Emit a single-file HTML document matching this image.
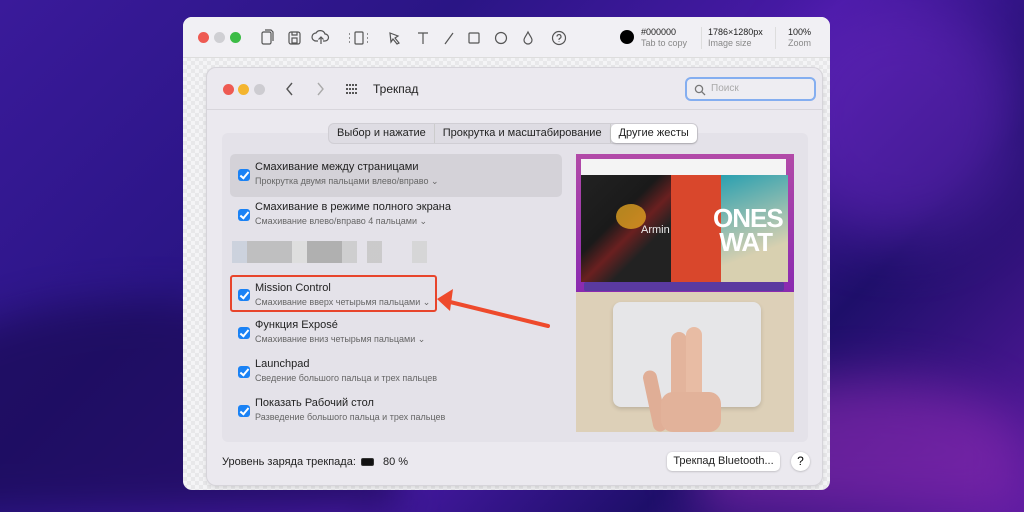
<!DOCTYPE html>
<html style="width:1024px;height:512px;overflow:hidden"><head><meta charset="utf-8"><style>
*{margin:0;padding:0;box-sizing:border-box}
html{background:#2a1585}
body{width:1024px;height:512px;overflow:hidden;position:relative;font-family:"Liberation Sans","Noto Sans CJK SC",sans-serif;
background:linear-gradient(135deg,#3a1a9a 0%,#2a1585 30%,#4a1aa8 55%,#1e0f6a 75%,#5a1aa0 100%)}
.bgw{position:absolute;left:0;top:0;width:1024px;height:512px;overflow:hidden}
.bg1{position:absolute;left:-100px;top:300px;width:500px;height:212px;border-radius:50% 50% 0 0;background:#1a0b55;opacity:.7;filter:blur(20px)}
.bg2{position:absolute;left:780px;top:0;width:244px;height:240px;border-radius:50%;background:#6a28c0;opacity:.5;filter:blur(30px)}
.bg3{position:absolute;left:700px;top:380px;width:324px;height:132px;border-radius:50% 50% 0 0;background:#8a2ab0;opacity:.6;filter:blur(25px)}
.outer{position:absolute;left:183px;top:17px;width:647px;height:473px;border-radius:9px;overflow:hidden;
background-color:#f4f4f6;background-image:linear-gradient(45deg,#e8e8ea 25%,transparent 25%,transparent 75%,#e8e8ea 75%),linear-gradient(45deg,#e8e8ea 25%,transparent 25%,transparent 75%,#e8e8ea 75%);background-size:8px 8px;background-position:0 0,4px 4px}
.tb{position:absolute;left:0;top:0;width:100%;height:41px;background:#f1f0f4;border-bottom:1px solid #ddd}
.dot{position:absolute;width:11px;height:11px;border-radius:50%}
.tx{position:absolute;font-size:9px;color:#222;line-height:11px}
.tx small{display:block;color:#888;font-size:9px}
.inner{position:absolute;left:24px;top:51px;width:615px;height:417px;background:#ebe9ef;border-radius:9px;box-shadow:0 0 0 1px #d6d4da,0 2px 6px rgba(0,0,0,.15)}
.hdr{position:absolute;left:0;top:0;width:100%;height:42px;border-bottom:1px solid #d8d6dc}
.panel{position:absolute;left:15px;top:65px;width:586px;height:309px;background:#e4e2e9;border-radius:6px}
.tabs{position:absolute;left:122px;top:56px;height:19px;border-radius:5px;background:#dedce3;display:flex;font-size:11px;color:#222;box-shadow:0 0 0 1px #d0ced4}
.tabs div{padding:3px 8px;line-height:13px;border-right:1px solid #ccc}
.tabs .sel{background:#fff;border-radius:5px;border:none;box-shadow:0 1px 2px rgba(0,0,0,.2)}
.row{position:absolute;left:8px;width:332px;height:43px}
.cb{position:absolute;left:8px;top:15px;width:12px;height:12px;border-radius:3px;background:#1a82f5}
.cb:after{content:"";position:absolute;left:4px;top:1px;width:3px;height:7px;border:solid #fff;border-width:0 2px 2px 0;transform:rotate(40deg)}
.t1{position:absolute;left:25px;top:7px;font-size:11px;color:#222}
.t2{position:absolute;left:25px;top:22px;font-size:9px;color:#666}
</style></head><body>
<div class="bgw"><div class="bg1"></div><div class="bg2"></div><div class="bg3"></div></div>
<div class="outer">
 <div class="tb">
  <div class="dot" style="left:15px;top:15px;background:#ee5a52"></div>
  <div class="dot" style="left:31px;top:15px;background:#cfcfd3"></div>
  <div class="dot" style="left:47px;top:15px;background:#3cbc46"></div>
  <svg style="position:absolute;left:76px;top:12px" width="320" height="18" fill="none" stroke="#555" stroke-width="1.2">
   <rect x="3" y="3" width="9" height="12" rx="1.5"/><path d="M6 1h6l2 2v9"/>
   <rect x="30" y="3" width="11" height="12" rx="2"/><rect x="33" y="9" width="5" height="5"/><path d="M33 3v3h5V3"/>
   <path d="M59 12h-2a4 4 0 0 1 0-8a5 5 0 0 1 9 1a3.5 3.5 0 0 1 0 7h-2M62 15V8M59.5 10.5L62 8l2.5 2.5"/>
   <rect x="96" y="3" width="8" height="12" rx="1"/><path d="M90 5h1M90 9h1M90 13h1M108 5h1M108 9h1M108 13h1" stroke-dasharray="1 1"/>
   <path d="M131 4l8 3-3 2 4 5-2 1-4-5-2 3z"/>
   <path d="M159 4h10M164 4v11"/>
   <path d="M186 15l8-11"/>
   <rect x="210" y="4" width="10" height="10" rx="1"/>
   <circle cx="242" cy="9" r="5.5"/>
   <path d="M269 3c-2 4-4 6-4 8a4 4 0 0 0 8 0c0-2-2-4-4-8z"/>
   <circle cx="300" cy="9" r="6.5"/><path d="M298 7.5a2 2 0 1 1 2.5 2c-.5.3-.5.8-.5 1.5M300 12.5v.5"/>
  </svg>
  <div class="dot" style="left:437px;top:13px;width:14px;height:14px;background:#000"></div>
  <div class="tx" style="left:458px;top:10px">#000000<small>Tab to copy</small></div>
  <div class="tx" style="left:525px;top:10px">1786×1280px<small>Image size</small></div>
  <div style="position:absolute;left:518px;top:10px;width:1px;height:22px;background:#ddd"></div>
  <div style="position:absolute;left:592px;top:10px;width:1px;height:22px;background:#ddd"></div>
  <div class="tx" style="left:605px;top:10px;text-align:right">100%<small>Zoom</small></div>
 </div>
 <div class="inner">
  <div class="hdr">
   <div class="dot" style="left:16px;top:16px;background:#ee5a52"></div>
   <div class="dot" style="left:31px;top:16px;background:#f4b52f"></div>
   <div class="dot" style="left:47px;top:16px;background:#cdccd1"></div>
   <svg style="position:absolute;left:78px;top:13px" width="80" height="16" fill="none" stroke="#555" stroke-width="1.4"><path d="M7 2L2 8l5 6"/><path d="M33 2l5 6-5 6" stroke="#aaa"/>
    <g fill="#555" stroke="none"><rect x="61" y="3" width="2" height="2"/><rect x="64" y="3" width="2" height="2"/><rect x="67" y="3" width="2" height="2"/><rect x="70" y="3" width="2" height="2"/><rect x="61" y="7" width="2" height="2"/><rect x="64" y="7" width="2" height="2"/><rect x="67" y="7" width="2" height="2"/><rect x="70" y="7" width="2" height="2"/><rect x="61" y="11" width="2" height="2"/><rect x="64" y="11" width="2" height="2"/><rect x="67" y="11" width="2" height="2"/><rect x="70" y="11" width="2" height="2"/></g></svg>
   <div style="position:absolute;left:166px;top:14px;font-size:12px;color:#222">Трекпад</div>
   <div style="position:absolute;left:478px;top:9px;width:131px;height:24px;border:2px solid #84aef0;border-radius:6px;background:#eeedf2;font-size:10px;color:#aaa;padding:4px 0 0 24px">Поиск
    <svg style="position:absolute;left:7px;top:5px" width="12" height="12" fill="none" stroke="#777" stroke-width="1.3"><circle cx="5" cy="5" r="3.6"/><path d="M7.6 7.6L11 11"/></svg></div>
  </div>
  <div class="panel">
   <div class="row" style="top:21px;background:#d4d2d8;border-radius:5px"><div class="cb"></div><div class="t1">Смахивание между страницами</div><div class="t2">Прокрутка двумя пальцами влево/вправо ⌄</div></div>
   <div class="row" style="top:61px"><div class="cb"></div><div class="t1">Смахивание в режиме полного экрана</div><div class="t2">Смахивание влево/вправо 4 пальцами ⌄</div></div>
   <div style="position:absolute;left:10px;top:108px;width:195px;height:22px;background:linear-gradient(90deg,#c9d0dc 0 15px,#bbb 15px 60px,#ddd 60px 75px,#aaa 75px 110px,#ccc 110px 125px,#e4e2e9 125px 135px,#c8c8c8 135px 150px,#e4e2e9 150px 180px,#d5d5d5 180px 195px);opacity:.9"></div>
   <div class="row" style="top:142px;width:207px;height:37px;border:2px solid #e8452c;border-radius:3px"><div class="cb" style="left:6px;top:12px"></div><div class="t1" style="left:23px;top:5px">Mission Control</div><div class="t2" style="left:23px;top:20px">Смахивание вверх четырьмя пальцами ⌄</div></div>
   <div class="row" style="top:179px"><div class="cb"></div><div class="t1">Функция Exposé</div><div class="t2">Смахивание вниз четырьмя пальцами ⌄</div></div>
   <div class="row" style="top:218px"><div class="cb"></div><div class="t1">Launchpad</div><div class="t2">Сведение большого пальца и трех пальцев</div></div>
   <div class="row" style="top:257px"><div class="cb"></div><div class="t1">Показать Рабочий стол</div><div class="t2">Разведение большого пальца и трех пальцев</div></div>
   <div style="position:absolute;left:354px;top:21px;width:218px;height:138px;background:linear-gradient(#b24aa8,#8a2ab0)">
    <div style="position:absolute;left:5px;top:5px;width:205px;height:16px;background:#f4f4f4"></div>
    <div style="position:absolute;left:5px;top:21px;width:90px;height:107px;background:linear-gradient(135deg,#222 0,#1a1a1a 40%,#6a2020 55%,#222 70%)"></div>
    <div style="position:absolute;left:40px;top:50px;width:30px;height:25px;background:#e0a020;border-radius:50%;opacity:.8"></div>
    <div style="position:absolute;left:65px;top:70px;font-size:11px;color:#eee">Armin</div>
    <div style="position:absolute;left:95px;top:21px;width:117px;height:107px;background:#d9472c"></div>
    <div style="position:absolute;left:145px;top:21px;width:67px;height:107px;background:linear-gradient(160deg,#2aa0b0,#d8d0b0 70%)"></div>
    <div style="position:absolute;left:137px;top:52px;font:bold 26px/24px 'Liberation Sans',sans-serif;color:#fff;letter-spacing:-1px">ONES<br>&nbsp;WAT</div>
    <div style="position:absolute;left:8px;top:128px;width:200px;height:9px;background:#5a3aa0;border-radius:2px"></div>
   </div>
   <div style="position:absolute;left:354px;top:159px;width:218px;height:140px;background:#ddd0b8;overflow:hidden">
    <div style="position:absolute;left:37px;top:10px;width:148px;height:105px;border-radius:8px;background:#e6e6e8;box-shadow:0 2px 4px rgba(0,0,0,.15)"></div>
    <div style="position:absolute;left:95px;top:40px;width:16px;height:100px;border-radius:8px;background:#e3b49c"></div>
    <div style="position:absolute;left:110px;top:35px;width:16px;height:105px;border-radius:8px;background:#e8bca4"></div>
    <div style="position:absolute;left:72px;top:78px;width:14px;height:62px;border-radius:7px;background:#e0ae96;transform:rotate(-12deg)"></div>
    <div style="position:absolute;left:85px;top:100px;width:60px;height:40px;border-radius:12px;background:#e2b29a"></div>
   </div>
  </div>
  <div class="tabs"><div>Выбор и нажатие</div><div>Прокрутка и масштабирование</div><div class="sel">Другие жесты</div></div>
  <div style="position:absolute;left:15px;top:388px;font-size:11px;color:#222">Уровень заряда трекпада:</div>
  <div style="position:absolute;left:154px;top:390px;width:13px;height:8px;border:1px solid #333;border-radius:2px;background:#111"></div>
  <div style="position:absolute;left:176px;top:388px;font-size:11px;color:#222">80 %</div>
  <div style="position:absolute;left:460px;top:384px;width:113px;height:19px;background:#fff;border-radius:5px;box-shadow:0 0.5px 2px rgba(0,0,0,.25);font-size:11px;text-align:center;line-height:19px;color:#222">Трекпад Bluetooth...</div>
  <div style="position:absolute;left:584px;top:384px;width:19px;height:19px;border-radius:50%;background:#fff;box-shadow:0 0.5px 2px rgba(0,0,0,.25);font-size:12px;text-align:center;line-height:19px">?</div>
 </div>
</div>
<svg style="position:absolute;left:0;top:0" width="1024" height="512"><path d="M548 326L446 301" stroke="#ee4a2c" stroke-width="4" stroke-linecap="round"/><path d="M437 299l16-10-3 22z" fill="#ee4a2c"/></svg>
</body></html>
